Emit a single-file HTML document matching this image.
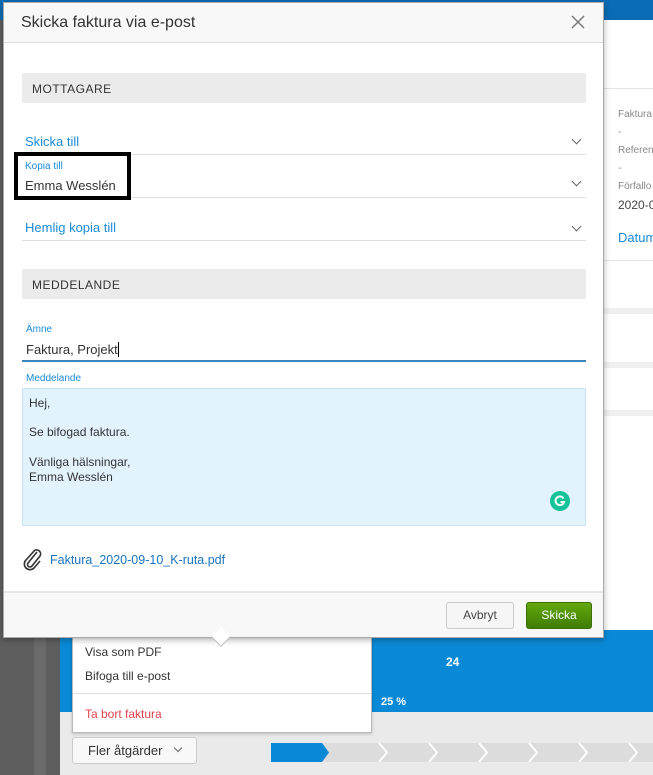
<!DOCTYPE html>
<html><head><meta charset="utf-8"><style>
*{box-sizing:border-box;margin:0;padding:0}
body{width:653px;height:775px;overflow:hidden;position:relative;font-family:"Liberation Sans",sans-serif;background:#e9e9e9;color:#333}
.abs{position:absolute}
.lbl{color:#1a8ad6}
.row{position:absolute;left:22px;width:564px;border-bottom:1px solid #ddd}
.chev{position:absolute;right:6px;width:7px;height:7px;border-right:1px solid #666;border-bottom:1px solid #666;transform:rotate(45deg)}
</style></head><body>
<div class="abs" style="left:0;top:0;width:60px;height:775px;background:#5e5e5e"></div>
<div class="abs" style="left:34px;top:0;width:12px;height:775px;background:#6a6a6a"></div>
<div class="abs" style="left:0;top:0;width:653px;height:20px;background:#0a6cb4"></div>
<div class="abs" style="left:60px;top:20px;width:593px;height:610px;background:#fff"></div>
<div class="abs" style="left:604px;top:88px;width:49px;height:1px;background:#e4e4e4"></div>
<div class="abs" style="left:604px;top:260px;width:49px;height:1px;background:#e4e4e4"></div>
<div class="abs" style="left:604px;top:308px;width:49px;height:6px;background:#f0f0f0"></div>
<div class="abs" style="left:604px;top:362px;width:49px;height:6px;background:#f0f0f0"></div>
<div class="abs" style="left:604px;top:410px;width:49px;height:6px;background:#f0f0f0"></div>
<div class="abs" style="left:618px;top:106px;font-size:10px;color:#888;line-height:18px;white-space:nowrap">Faktura<br>-<br>Referen<br>-<br>Förfallo<br><span style="font-size:12px;color:#444">2020-0</span></div>
<div class="abs" style="left:618px;top:230px;font-size:13px;color:#1a8ad6">Datum</div>
<div class="abs" style="left:60px;top:630px;width:593px;height:82px;background:#0a89d6"></div>
<div class="abs" style="left:446px;top:655px;font-size:12px;font-weight:bold;color:#fff">24</div>
<div class="abs" style="left:381px;top:696px;font-size:11px;font-weight:bold;color:#fff">25 %</div>
<div class="abs" style="left:60px;top:712px;width:593px;height:63px;background:#eaeaea"></div>
<div class="abs" style="left:271px;top:743px;width:382px;height:19px;background:#dcdcdc"></div>
<div class="abs" style="left:271px;top:743px;width:58px;height:19px;background:#0a89d6;clip-path:polygon(0 0,88% 0,100% 50%,88% 100%,0 100%)"></div>
<svg class="abs" style="left:271px;top:743px" width="382" height="19"><g fill="none" stroke="#fff" stroke-width="2"><path d="M108 0l8 9.5-8 9.5M158 0l8 9.5-8 9.5M208 0l8 9.5-8 9.5M258 0l8 9.5-8 9.5M308 0l8 9.5-8 9.5M358 0l8 9.5-8 9.5"/></g></svg>
<div class="abs" style="left:72px;top:737px;width:125px;height:27px;background:#f8f8f8;border:1px solid #ccc;border-radius:3px;font-size:13px;padding:5px 0 0 15px">Fler åtgärder<span style="position:absolute;left:102px;top:7px;width:6px;height:6px;border-right:1px solid #666;border-bottom:1px solid #666;transform:rotate(45deg)"></span></div>
<div class="abs" style="left:72px;top:636px;width:300px;height:97px;background:#fff;border:1px solid #bbb;box-shadow:0 1px 3px rgba(0,0,0,.2);font-size:12px">
<div class="abs" style="left:12px;top:8px">Visa som PDF</div>
<div class="abs" style="left:12px;top:32px">Bifoga till e-post</div>
<div class="abs" style="left:0;top:56px;width:298px;height:1px;background:#ddd"></div>
<div class="abs" style="left:12px;top:70px;color:#e0434e">Ta bort faktura</div>
</div>
<div class="abs" style="left:3px;top:2px;width:601px;height:636px;background:#fff;border:1px solid #aaa;box-shadow:0 2px 6px rgba(0,0,0,.3)">
<div class="abs" style="left:0;top:0;width:599px;height:40px;background:#f8f8f8;border-bottom:1px solid #ddd"></div>
<div class="abs" style="left:17px;top:11px;font-size:16px;color:#333">Skicka faktura via e-post</div>
<svg class="abs" style="left:567px;top:12px" width="14" height="14"><path d="M1 1L13 13M13 1L1 13" stroke="#777" stroke-width="1.4"/></svg>
<div class="abs" style="left:18px;top:70px;width:564px;height:30px;background:#ebebeb;font-size:12px;letter-spacing:.5px;padding:9px 0 0 10px;color:#333">MOTTAGARE</div>
<div class="row" style="left:18px;top:125px;height:27px"><span class="lbl abs" style="left:3px;top:6px;font-size:13px">Skicka till</span><span class="chev" style="top:8px"></span></div>
<div class="row" style="left:18px;top:153px;height:42px"><span class="lbl abs" style="left:3px;top:5px;font-size:10px">Kopia till</span><span class="abs" style="left:3px;top:22px;font-size:13px;color:#333">Emma Wesslén</span><span class="chev" style="top:22px"></span></div>
<div class="abs" style="left:10px;top:149px;width:117px;height:48px;border:4px solid #000"></div>
<div class="row" style="left:18px;top:210px;height:28px"><span class="lbl abs" style="left:3px;top:7px;font-size:13px">Hemlig kopia till</span><span class="chev" style="top:10px"></span></div>
<div class="abs" style="left:18px;top:266px;width:564px;height:30px;background:#ebebeb;font-size:12px;letter-spacing:.5px;padding:9px 0 0 10px;color:#333">MEDDELANDE</div>
<div class="abs lbl" style="left:22px;top:321px;font-size:10px">Ämne</div>
<div class="abs" style="left:22px;top:339px;font-size:13px">Faktura, Projekt<span style="display:inline-block;width:1px;height:15px;background:#000;vertical-align:-3px"></span></div>
<div class="abs" style="left:18px;top:357px;width:564px;height:2px;background:#3a86c0"></div>
<div class="abs lbl" style="left:22px;top:370px;font-size:10px">Meddelande</div>
<div class="abs" style="left:18px;top:385px;width:564px;height:138px;background:#e3f3fd;border:1px solid #c7e2f3;font-size:12px;line-height:14.7px;padding:7px 0 0 6px;color:#333">Hej,<br><br>Se bifogad faktura.<br><br>Vänliga hälsningar,<br>Emma Wesslén</div>
<div class="abs" style="left:546px;top:488px;width:20px;height:20px;border-radius:50%;background:#15c39a"></div>
<svg class="abs" style="left:550px;top:492px" width="12" height="12"><path d="M9.5 3.5A4.3 4.3 0 1 0 10 7H6.5" fill="none" stroke="#fff" stroke-width="2"/></svg>
<svg class="abs" style="left:19px;top:545px" width="20" height="24" viewBox="0 0 20 24"><path d="M14 4L5 15a2.5 2.5 0 0 0 3.5 3.5L17 8a4 4 0 0 0-5.5-5.5L3 12a5.5 5.5 0 0 0 8 8l6-7" fill="none" stroke="#333" stroke-width="1.6"/></svg>
<div class="abs" style="left:46px;top:550px;font-size:12.5px;color:#1a73c0">Faktura_2020-09-10_K-ruta.pdf</div>
<div class="abs" style="left:0;top:588px;width:599px;height:46px;background:#f8f8f8;border-top:2px solid #e6e6e6"></div>
<div class="abs" style="left:442px;top:599px;width:68px;height:27px;background:#f6f6f6;border:1px solid #ccc;border-radius:3px;font-size:12px;text-align:center;line-height:25px;color:#444">Avbryt</div>
<div class="abs" style="left:522px;top:599px;width:66px;height:27px;background:linear-gradient(#63a80e,#3f7c05);border:1px solid #3a7005;border-radius:3px;font-size:12px;text-align:center;line-height:25px;color:#fff">Skicka</div>
</div>
<div class="abs" style="left:214px;top:630px;width:14px;height:14px;background:#fff;border-right:1px solid #bbb;border-bottom:1px solid #bbb;transform:rotate(45deg)"></div>
</body></html>
